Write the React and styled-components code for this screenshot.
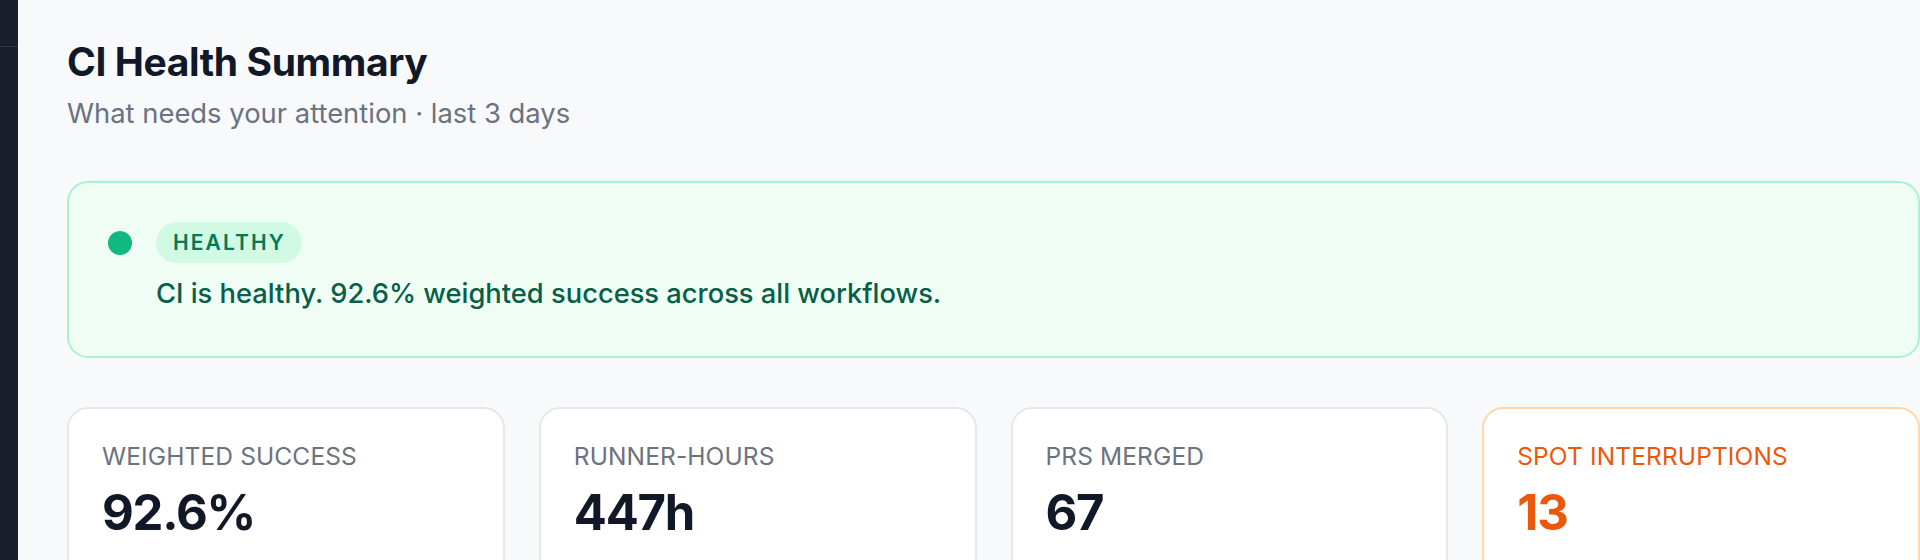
import React from 'react'
import { styled, createGlobalStyle } from 'styled-components'

const GlobalStyle = createGlobalStyle`
  html, body {
    margin: 0;
    padding: 0;
    background: #f8f9fb;
    font-family: Inter, "Noto Sans", "Liberation Sans", sans-serif;
    overflow: hidden;
  }
  * { box-sizing: border-box; }
`

const Shell = styled.div`
  display: flex;
  min-height: 100vh;
  width: 100%;
`

const Sidebar = styled.aside`
  width: 18px;
  flex-shrink: 0;
  background: #1a1f2c;
`

const SidebarHead = styled.div`
  height: 47px;
  border-bottom: 1px solid #2f3543;
`

const Main = styled.main`
  flex: 1;
  min-width: 0;
  padding: 39px 0 0 49px;
`

const Title = styled.h1`
  margin: 0;
  font-size: 39px;
  line-height: 46px;
  font-weight: 700;
  color: #111827;
  letter-spacing: -0.01em;
`

const Subtitle = styled.p`
  margin: 9px 0 0;
  font-size: 27.4px;
  line-height: 1.4;
  color: #6b7280;
`

const StatusCard = styled.section`
  margin-top: 49px;
  background: #f0fdf4;
  border: 2px solid #a7f3d0;
  border-radius: 21px;
  padding: 39px 39px 42px;
`

const StatusRow = styled.div`
  display: flex;
  align-items: flex-start;
  gap: 24px;
`

const Dot = styled.span`
  width: 24px;
  height: 24px;
  margin-top: 8.5px;
  border-radius: 50%;
  background: #10b981;
  flex-shrink: 0;
`

const StatusBody = styled.div`
  display: flex;
  flex-direction: column;
  align-items: flex-start;
  gap: 11px;
`

const Badge = styled.span`
  display: inline-block;
  padding: 10px 16px 10px 17px;
  border-radius: 999px;
  background: #d1fae5;
  color: #047857;
  font-size: 21px;
  line-height: 21px;
  font-weight: 600;
  letter-spacing: 0.1em;
`

const StatusText = styled.p`
  margin: 0;
  font-size: 27.3px;
  line-height: 1.45;
  font-weight: 500;
  color: #065f46;
`

const Stats = styled.div`
  margin-top: 49px;
  display: grid;
  grid-template-columns: repeat(4, 1fr);
  gap: 34px;
`

const StatCard = styled.div`
  background: #fff;
  border: 2px solid ${p => (p.$warn ? '#fed7aa' : '#e5e7eb')};
  border-radius: 21px;
  padding: 30px 33px;
  min-height: 200px;
`

const StatLabel = styled.div`
  font-size: 24.5px;
  line-height: 1.4;
  letter-spacing: 0.005em;
  text-transform: uppercase;
  color: ${p => (p.$warn ? '#ea580c' : '#6b7280')};
`

const StatValue = styled.div`
  margin-top: 11px;
  font-size: 49px;
  line-height: 1.2;
  font-weight: 700;
  letter-spacing: -0.025em;
  color: ${p => (p.$warn ? '#ea580c' : '#111827')};
`

const stats = [
  { label: 'Weighted success', value: '92.6%' },
  { label: 'Runner-hours', value: '447h' },
  { label: 'PRs merged', value: '67' },
  { label: 'Spot interruptions', value: '13', warn: true },
]

export default function App() {
  return (
    <>
      <GlobalStyle />
      <Shell>
        <Sidebar>
          <SidebarHead />
        </Sidebar>
        <Main>
          <Title>CI Health Summary</Title>
          <Subtitle>What needs your attention · last 3 days</Subtitle>

          <StatusCard>
            <StatusRow>
              <Dot />
              <StatusBody>
                <Badge>HEALTHY</Badge>
                <StatusText>CI is healthy. 92.6% weighted success across all workflows.</StatusText>
              </StatusBody>
            </StatusRow>
          </StatusCard>

          <Stats>
            {stats.map(s => (
              <StatCard key={s.label} $warn={s.warn}>
                <StatLabel $warn={s.warn}>{s.label}</StatLabel>
                <StatValue $warn={s.warn}>{s.value}</StatValue>
              </StatCard>
            ))}
          </Stats>
        </Main>
      </Shell>
    </>
  )
}
